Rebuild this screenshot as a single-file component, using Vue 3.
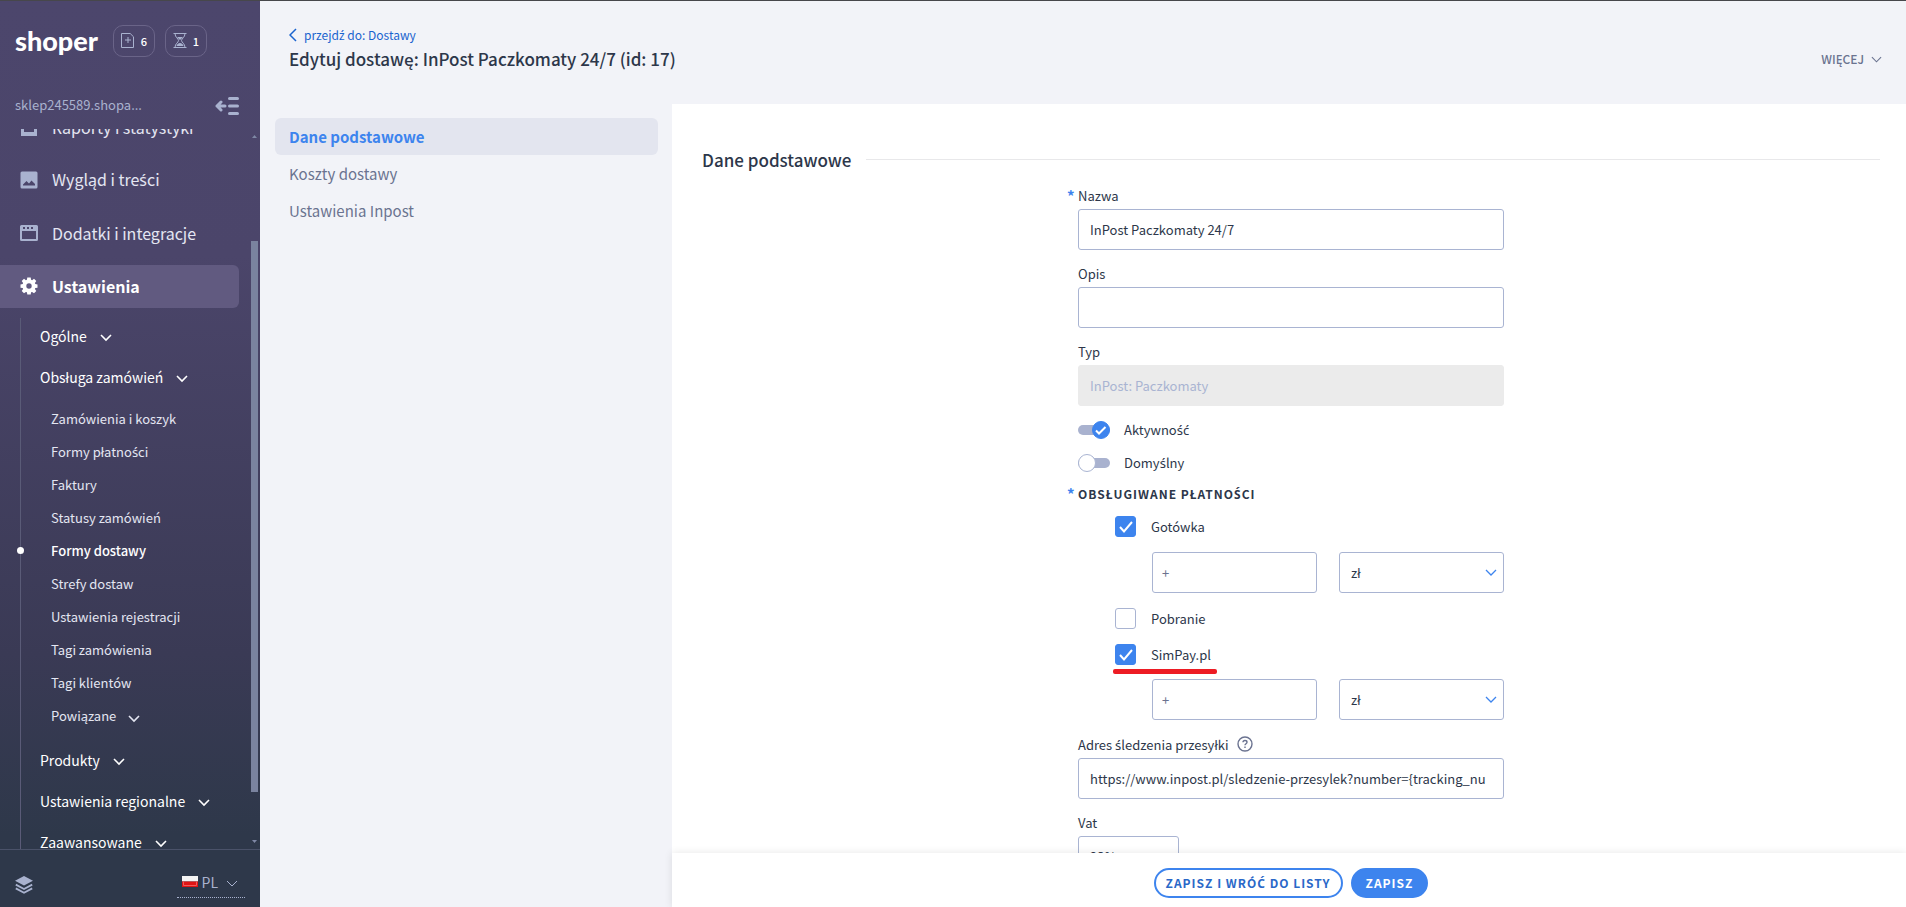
<script setup>
import { ref, reactive, h } from 'vue'

// Renders a label; acute consonants that the main face lacks take a Latin companion face.
const Txt = ({ s }) => s.split(/([śźćŚŹĆ]+)/).filter(Boolean).map(t => (/[śźćŚŹĆ]/.test(t) ? h('span', { class: 'acute' }, t) : t))
Txt.props = ['s']

const orderLinks = ['Zamówienia i koszyk', 'Formy płatności', 'Faktury', 'Statusy zamówień', 'Formy dostawy', 'Strefy dostaw', 'Ustawienia rejestracji', 'Tagi zamówienia', 'Tagi klientów']
const groups = ['Produkty', 'Ustawienia regionalne', 'Zaawansowane']
const tabs = ['Dane podstawowe', 'Koszty dostawy', 'Ustawienia Inpost']
const activeTab = ref('Dane podstawowe')

const form = reactive({
  name: 'InPost Paczkomaty 24/7',
  description: '',
  type: 'InPost: Paczkomaty',
  active: true,
  isDefault: false,
  tracking: 'https://www.inpost.pl/sledzenie-przesylek?number={tracking_nu',
  vat: '23%'
})
const payments = reactive([
  { id: 'cash', label: 'Gotówka', on: true, value: '+', marked: false },
  { id: 'cod', label: 'Pobranie', on: false, value: '+', marked: false },
  { id: 'simpay', label: 'SimPay.pl', on: true, value: '+', marked: true }
])
</script>

<template>
  <div class="app">
    <aside class="sidebar">
      <div class="brand">
        <span class="logo">shoper</span>
        <button class="counter" type="button" aria-label="Nowe zamówienia">
          <svg width="14" height="15" viewBox="0 0 14 15" fill="none" stroke="currentColor"><path d="M.5.5h8.7l3.3 3.3v10.7H.5zM7 4v6M4 7h6" /></svg>
          <span>6</span>
        </button>
        <button class="counter" type="button" aria-label="Oczekujące">
          <svg width="14" height="15" viewBox="0 0 14 15" fill="none" stroke="currentColor"><path d="M.5.5h13M.5 14.500h13M2 .5c0 4 3.500 5 3.500 7S2 10.500 2 14.500M12 .5c0 4-3.500 5-3.500 7s3.500 3 3.500 7" /><path d="M4 4h6L7 7zM3.500 13c0-1.500 2-3 3.500-3s3.500 1.500 3.500 3z" fill="currentColor" stroke="none" /></svg>
          <span>1</span>
        </button>
      </div>
      <div class="shop">
        <span>sklep245589.shopa...</span>
        <button class="plain" type="button" aria-label="Zwiń menu">
          <svg width="24" height="18" viewBox="0 0 24 18" fill="none" stroke="currentColor" stroke-width="3" stroke-linecap="round"><path d="M14.500 1.500h8M14.500 9h8M14.500 16.500h8" /><path d="M2 9h8M6 5L2 9l4 4" stroke-linejoin="round" /></svg>
        </button>
      </div>

      <div class="scroller">
        <nav class="menu">
          <a class="item" href="#">
            <svg width="18" height="18" viewBox="0 0 18 18" fill="currentColor"><path d="M1 1h16v17H1zm3 3v10h10V4z" fill-rule="evenodd" /></svg>
            Raporty i statystyki
          </a>
          <a class="item" href="#">
            <svg width="18" height="18" viewBox="0 0 18 18" fill="currentColor"><path d="M2 .5h14a1.500 1.500 0 0 1 1.500 1.500v14a1.500 1.500 0 0 1-1.500 1.500H2A1.500 1.500 0 0 1 .5 16V2A1.500 1.500 0 0 1 2 .5zM3 14.500h12V13L11.500 9.500 9 12.500 6.500 10 3 13.500z" fill-rule="evenodd" /></svg>
            <span><Txt s="Wygląd i treści" /></span>
          </a>
          <a class="item" href="#">
            <svg width="18" height="16" viewBox="0 0 18 16" fill="currentColor"><path d="M1.500 0h15A1.500 1.500 0 0 1 18 1.500v13a1.500 1.500 0 0 1-1.500 1.500h-15A1.500 1.500 0 0 1 0 14.500v-13A1.500 1.500 0 0 1 1.500 0zM2 6v8h14V6zM3 2v2h2V2zm4 0v2h2V2zm4 0v2h2V2z" fill-rule="evenodd" /></svg>
            Dodatki i integracje
          </a>
          <a class="item current" href="#">
            <svg width="18" height="18" viewBox="0 0 18 18" fill="currentColor"><path d="M7.300.5h3.400l.4 2.300 1 .4L14 1.800l2.300 2.300-1.400 1.900.4 1 2.200.4v3.300l-2.200.4-.4 1 1.400 1.900-2.300 2.300-1.900-1.400-1 .4-.4 2.200H7.300l-.4-2.200-1-.4L4 16.300 1.700 14l1.400-1.900-.4-1-2.200-.4V7.400l2.200-.4.4-1L1.700 4.100 4 1.800l1.900 1.400 1-.4zM9 6.300a2.700 2.700 0 1 0 0 5.400 2.700 2.700 0 0 0 0-5.400z" fill-rule="evenodd" /></svg>
            Ustawienia
          </a>
          <div class="submenu">
            <a class="group" href="#">Ogólne <svg class="chev" viewBox="0 0 12 7"><path d="M1 1l5 5 5-5" /></svg></a>
            <a class="group" href="#">Obsługa zamówień <svg class="chev" viewBox="0 0 12 7"><path d="M1 1l5 5 5-5" /></svg></a>
            <div class="links">
              <a v-for="l in orderLinks" :key="l" href="#" :class="{ on: l === 'Formy dostawy' }"><span><Txt :s="l" /></span></a>
              <a class="more" href="#">Powiązane <svg class="chev" viewBox="0 0 12 7"><path d="M1 1l5 5 5-5" /></svg></a>
            </div>
            <a v-for="g in groups" :key="g" class="group" href="#">{{ g }} <svg class="chev" viewBox="0 0 12 7"><path d="M1 1l5 5 5-5" /></svg></a>
          </div>
        </nav>
        <div class="rail" aria-hidden="true">
          <svg width="5" height="3" viewBox="0 0 5 3"><path d="M0 3L2.500 0 5 3z" /></svg>
          <div class="track"><div class="thumb"></div></div>
          <svg width="5" height="3" viewBox="0 0 5 3"><path d="M0 0l2.500 3L5 0z" /></svg>
        </div>
      </div>

      <div class="side-foot">
        <svg width="18" height="18" viewBox="0 0 18 18"><path d="M9 0l9 4.800-9 4.800-9-4.800z" fill="#a9b2cf" /><path d="M.8 8.600L9 13l8.200-4.400M.8 12.400L9 16.800l8.200-4.400" fill="none" stroke="#a9b2cf" stroke-width="1.800" /></svg>
        <button class="lang" type="button">
          <svg width="16" height="11" viewBox="0 0 16 11"><path d="M0 0h16v5.500H0z" fill="#f4f4f4" /><path d="M0 5.500h16V11H0z" fill="#e01515" /><path d="M1.500 5.500v4h13v-4" fill="none" stroke="#f55a5a" /></svg>
          PL
          <svg class="chev thin" viewBox="0 0 12 7"><path d="M1 1l5 5 5-5" /></svg>
        </button>
      </div>
    </aside>

    <div class="main">
      <header class="head">
        <div>
          <a class="back" href="#"><svg width="8" height="14" viewBox="0 0 8 14"><path d="M7 1L1 7l6 6" /></svg><span><Txt s="przejdź do: Dostawy" /></span></a>
          <h1>Edytuj dostawę: InPost Paczkomaty 24/7 (id: 17)</h1>
        </div>
        <button class="plain actions" type="button">WIĘCEJ <svg width="11" height="7" viewBox="0 0 12 7"><path d="M1 1l5 5 5-5" /></svg></button>
      </header>

      <div class="body">
        <nav class="tabs">
          <a v-for="t in tabs" :key="t" href="#" :class="{ on: t === activeTab }" @click.prevent="activeTab = t">{{ t }}</a>
        </nav>

        <section class="panel">
          <div class="content">
            <h2><span>Dane podstawowe</span></h2>
            <form id="delivery" class="form" @submit.prevent>
              <div class="field">
                <label class="req" for="name">Nazwa</label>
                <input id="name" v-model="form.name" class="box" type="text">
              </div>
              <div class="field">
                <label for="desc">Opis</label>
                <input id="desc" v-model="form.description" class="box" type="text">
              </div>
              <div class="field">
                <label for="type">Typ</label>
                <input id="type" :value="form.type" class="box" type="text" disabled>
              </div>
              <label class="switch">
                <span class="toggle"><input v-model="form.active" type="checkbox"><svg v-if="form.active" viewBox="0 0 18 18"><path d="M4 9.500l3 3L13.500 6" /></svg></span>
                <span><Txt s="Aktywność" /></span>
              </label>
              <label class="switch">
                <span class="toggle"><input v-model="form.isDefault" type="checkbox"></span>
                <span><Txt s="Domyślny" /></span>
              </label>

              <h3 class="req"><Txt s="OBSŁUGIWANE PŁATNOŚCI" /></h3>
              <div class="payments">
                <template v-for="p in payments" :key="p.id">
                  <label class="check" :class="{ marked: p.marked }">
                    <span class="tick"><input v-model="p.on" type="checkbox"><svg v-if="p.on" viewBox="0 0 21 21"><path d="M5 11l4 4.500L17 6" /></svg></span>
                    {{ p.label }}
                  </label>
                  <div v-if="p.on" class="pair">
                    <input v-model="p.value" class="box plus" type="text" :aria-label="p.label + ' – dopłata'">
                    <div class="select">
                      <select class="box" :aria-label="p.label + ' – jednostka'"><option>zł</option><option>%</option></select>
                      <svg width="12" height="7" viewBox="0 0 12 7"><path d="M1 1l5 5 5-5" /></svg>
                    </div>
                  </div>
                </template>
              </div>

              <div class="field">
                <label for="track"><span><Txt s="Adres śledzenia przesyłki" /></span>
                  <svg class="help" width="16" height="16" viewBox="0 0 16 16"><circle cx="8" cy="8" r="7" /><path d="M6 6.300C6 5 7 4.500 8 4.500s2 .6 2 1.700c0 1.500-2 1.500-2 3.100M8 10.500v1.500" /></svg>
                </label>
                <input id="track" v-model="form.tracking" class="box" type="text">
              </div>
              <div class="field vat">
                <label for="vat">Vat</label>
                <input id="vat" v-model="form.vat" class="box" type="text">
              </div>
            </form>
          </div>
          <footer class="save">
            <button class="pill" type="submit" form="delivery"><Txt s="ZAPISZ I WRÓĆ DO LISTY" /></button>
            <button class="pill solid" type="submit" form="delivery">ZAPISZ</button>
          </footer>
        </section>
      </div>
    </div>
  </div>
</template>

<style>
body { margin: 0; }
.acute { font-family: "Noto Sans", sans-serif; }
</style>

<style scoped>
* { box-sizing: border-box; }
.app {
  display: flex;
  height: 100vh;
  overflow: hidden;
  border-top: 1px solid #47474b;
  font-family: "Noto Sans CJK SC", "Noto Sans", sans-serif;
  font-size: 13px;
  color: #2d374a;
}
a { color: inherit; text-decoration: none; }
button, input, select { font: inherit; color: inherit; margin: 0; }
button { padding: 0; border: 0; background: none; cursor: pointer; }
svg { flex: none; }

/* sidebar */
.sidebar {
  display: flex;
  flex-direction: column;
  flex: none;
  width: 260px;
  background: linear-gradient(#4c466c 0, #4b456a 28%, #3a3a55 72%, #2e384a 92%, #2e384a 100%);
  color: #e4e6f2;
}
.brand { display: flex; align-items: center; gap: 10px; height: 79px; padding: 0 15px; }
.logo { width: 88px; font-family: Lato, sans-serif; font-weight: 900; font-size: 27px; line-height: 32px; color: #fff; }
.counter {
  display: flex;
  align-items: center;
  justify-content: center;
  gap: 6px;
  width: 42px;
  height: 32px;
  border: 1px solid #6a6488;
  border-radius: 10px;
  font-size: 11px;
  font-weight: 500;
  line-height: 16px;
  color: #a9b2cf;
}
.counter span { color: #fff; }
.shop { display: flex; align-items: center; justify-content: space-between; height: 49px; padding: 2px 21px 0 15px; line-height: 18px; color: #a9b2cf; }
.shop span { padding-bottom: 2px; }
.plain { display: flex; align-items: center; }
.shop .plain { color: #a9b2cf; }
.scroller { display: flex; flex: 1; min-height: 0; overflow: hidden; }
.menu { flex: 1; margin-top: -23px; }
.item { display: flex; align-items: center; gap: 14px; width: 239px; height: 43px; margin-bottom: 10px; padding: 0 0 2px 20px; font-size: 16px; line-height: 24px; }
.item svg { width: 18px; color: #a9b2cf; }
.item.current { border-radius: 0 6px 6px 0; background: #615a80; font-weight: 700; color: #fff; }
.item.current svg { color: #fff; }
.submenu { margin-left: 20px; padding-left: 19px; border-left: 1px solid #5a5b77; }
.group { display: flex; align-items: center; gap: 13px; height: 41px; padding-bottom: 6px; font-size: 14px; line-height: 20px; color: #fff; white-space: nowrap; }
.chev { width: 12px; height: 7px; margin-top: 4px; fill: none; stroke: currentColor; stroke-width: 1.6; overflow: visible; }
.links { padding: 2px 0 9px 11px; }
.links a { display: flex; align-items: center; gap: 12px; height: 33px; position: relative; line-height: 20px; }
.links a.on { font-weight: 500; color: #fff; }
.links a.on::before { content: ""; position: absolute; left: -34px; width: 7px; height: 7px; border-radius: 50%; background: #fff; }
.links a.more { height: 34px; }
.rail { display: flex; flex-direction: column; align-items: center; width: 9px; margin-right: 1px; padding: 6px 0; fill: #7f88a5; }
.track { flex: 1; width: 7px; padding: 103px 0 48px; }
.thumb { height: 100%; background: #7a839f; }
.side-foot { display: flex; align-items: center; justify-content: space-between; height: 58px; padding: 13px 15px 0; border-top: 1px solid #4a5269; }
.lang { display: flex; align-items: center; gap: 4px; height: 28px; margin-bottom: 2px; padding: 0 7px 4px 5px; border-bottom: 1px dotted #a9b2cf; font-size: 14px; line-height: 20px; color: #a9b2cf; }
.chev.thin { margin-left: 4px; stroke-width: 1; }

/* header */
.main { display: flex; flex-direction: column; flex: 1; min-width: 0; background: #f2f3f8; }
.head { display: flex; justify-content: space-between; height: 103px; padding: 23px 24px 0 29px; }
.back { display: flex; align-items: center; gap: 7px; height: 22px; color: #1a64cf; font-size: 12px; line-height: 20px; }
.back svg { fill: none; stroke: currentColor; stroke-width: 1.5; }
h1 { margin: 0; font-size: 17px; font-weight: 500; line-height: 26px; }
.actions { gap: 7px; height: 70px; font-size: 12px; font-weight: 500; color: #6b7390; }
.actions svg { fill: none; stroke: currentColor; stroke-width: 1.2; }

.body { display: flex; flex: 1; min-height: 0; }
.tabs { flex: none; width: 412px; padding: 14px 14px 0 15px; }
.tabs a { display: block; height: 37px; padding-left: 14px; border-radius: 6px; font-size: 15px; line-height: 37px; color: #6b7390; }
.tabs a.on { background: #e3e5ef; font-weight: 700; color: #3d84ee; }

/* form */
.panel { display: flex; flex-direction: column; flex: 1; min-width: 0; background: #fff; }
.content { flex: 1; min-height: 0; overflow: hidden; padding: 42px 26px 0 30px; }
h2 { display: flex; align-items: center; gap: 15px; margin: 0 0 13px; font-size: 17px; font-weight: 500; line-height: 27px; }
h2::after { content: ""; flex: 1; height: 1px; background: #e8e8ea; }
.form { max-width: 426px; margin: 0 auto; }
.field { margin-bottom: 14px; }
.field label { display: flex; align-items: center; height: 20px; margin-bottom: 3px; padding-bottom: 2px; gap: 8px; position: relative; }
.req { position: relative; }
.req::before { content: "*"; position: absolute; left: -11px; font-size: 15px; font-weight: 700; color: #3d84ee; }
.box { display: block; width: 100%; height: 41px; padding: 0 11px 1px; border: 1px solid #a9b4d2; border-radius: 3px; background: #fff; outline: 0; }
.box:disabled { border-color: #ebebeb; background: #ebebeb; color: #a9b4d2; }
.help { fill: none; stroke: #6b7390; stroke-width: 1.4; }
.switch { display: flex; align-items: center; gap: 14px; height: 33px; }
.field + .switch { margin-top: -7px; }
.toggle { display: grid; align-items: center; width: 32px; height: 18px; position: relative; }
.toggle > * { grid-area: 1 / 1; }
.toggle::before { content: ""; grid-area: 1 / 1; height: 10px; border-radius: 5px; background: #a9b2cf; }
.toggle input { appearance: none; width: 18px; height: 18px; border: 1px solid #a9b4d2; border-radius: 50%; background: #fff; }
.toggle input:checked { justify-self: end; border-color: #3d84ee; background: #3d84ee; }
.toggle svg { justify-self: end; width: 18px; height: 18px; fill: none; stroke: #fff; stroke-width: 2; pointer-events: none; }
h3 { margin: 4px 0 10px; font-size: 12px; font-weight: 700; line-height: 22px; letter-spacing: 1px; }
.payments { padding-left: 37px; }
.check { display: flex; align-items: center; gap: 15px; width: max-content; height: 21px; margin-bottom: 15px; position: relative; }
.tick { display: grid; }
.tick > * { grid-area: 1 / 1; }
.tick input { appearance: none; width: 21px; height: 21px; border: 1px solid #a9b4d2; border-radius: 3px; background: #fff; }
.tick input:checked { border-color: #3d84ee; background: #3d84ee; }
.tick svg { width: 21px; height: 21px; fill: none; stroke: #fff; stroke-width: 2; pointer-events: none; }
.marked::after { content: ""; position: absolute; left: -2px; right: -6px; top: 25px; height: 5px; border-radius: 2px; background: #ed1c24; }
.marked { margin-bottom: 14px; }
.pair { display: grid; grid-template-columns: 1fr 1fr; gap: 22px; padding-left: 37px; margin-bottom: 15px; }
.plus { padding-left: 9px; color: #6b7390; }
.select { display: grid; align-items: center; justify-items: end; }
.select > * { grid-area: 1 / 1; }
.select select { appearance: none; }
.select svg { margin-right: 7px; fill: none; stroke: #3d84ee; stroke-width: 1.3; pointer-events: none; }
.vat .box { width: 101px; }

.save { display: flex; align-items: center; justify-content: center; gap: 8px; height: 54px; padding: 6px 26px 0 30px; background: #fff; box-shadow: 0 0 8px rgba(0, 0, 0, .1); z-index: 1; }
.pill { height: 30px; padding: 0 10px; border: 2px solid #3d84ee; border-radius: 15px; font-size: 12px; font-weight: 700; line-height: 18px; letter-spacing: 1px; color: #2a68c8; }
.pill.solid { padding: 0 13px; background: #3d84ee; color: #fff; }
</style>
